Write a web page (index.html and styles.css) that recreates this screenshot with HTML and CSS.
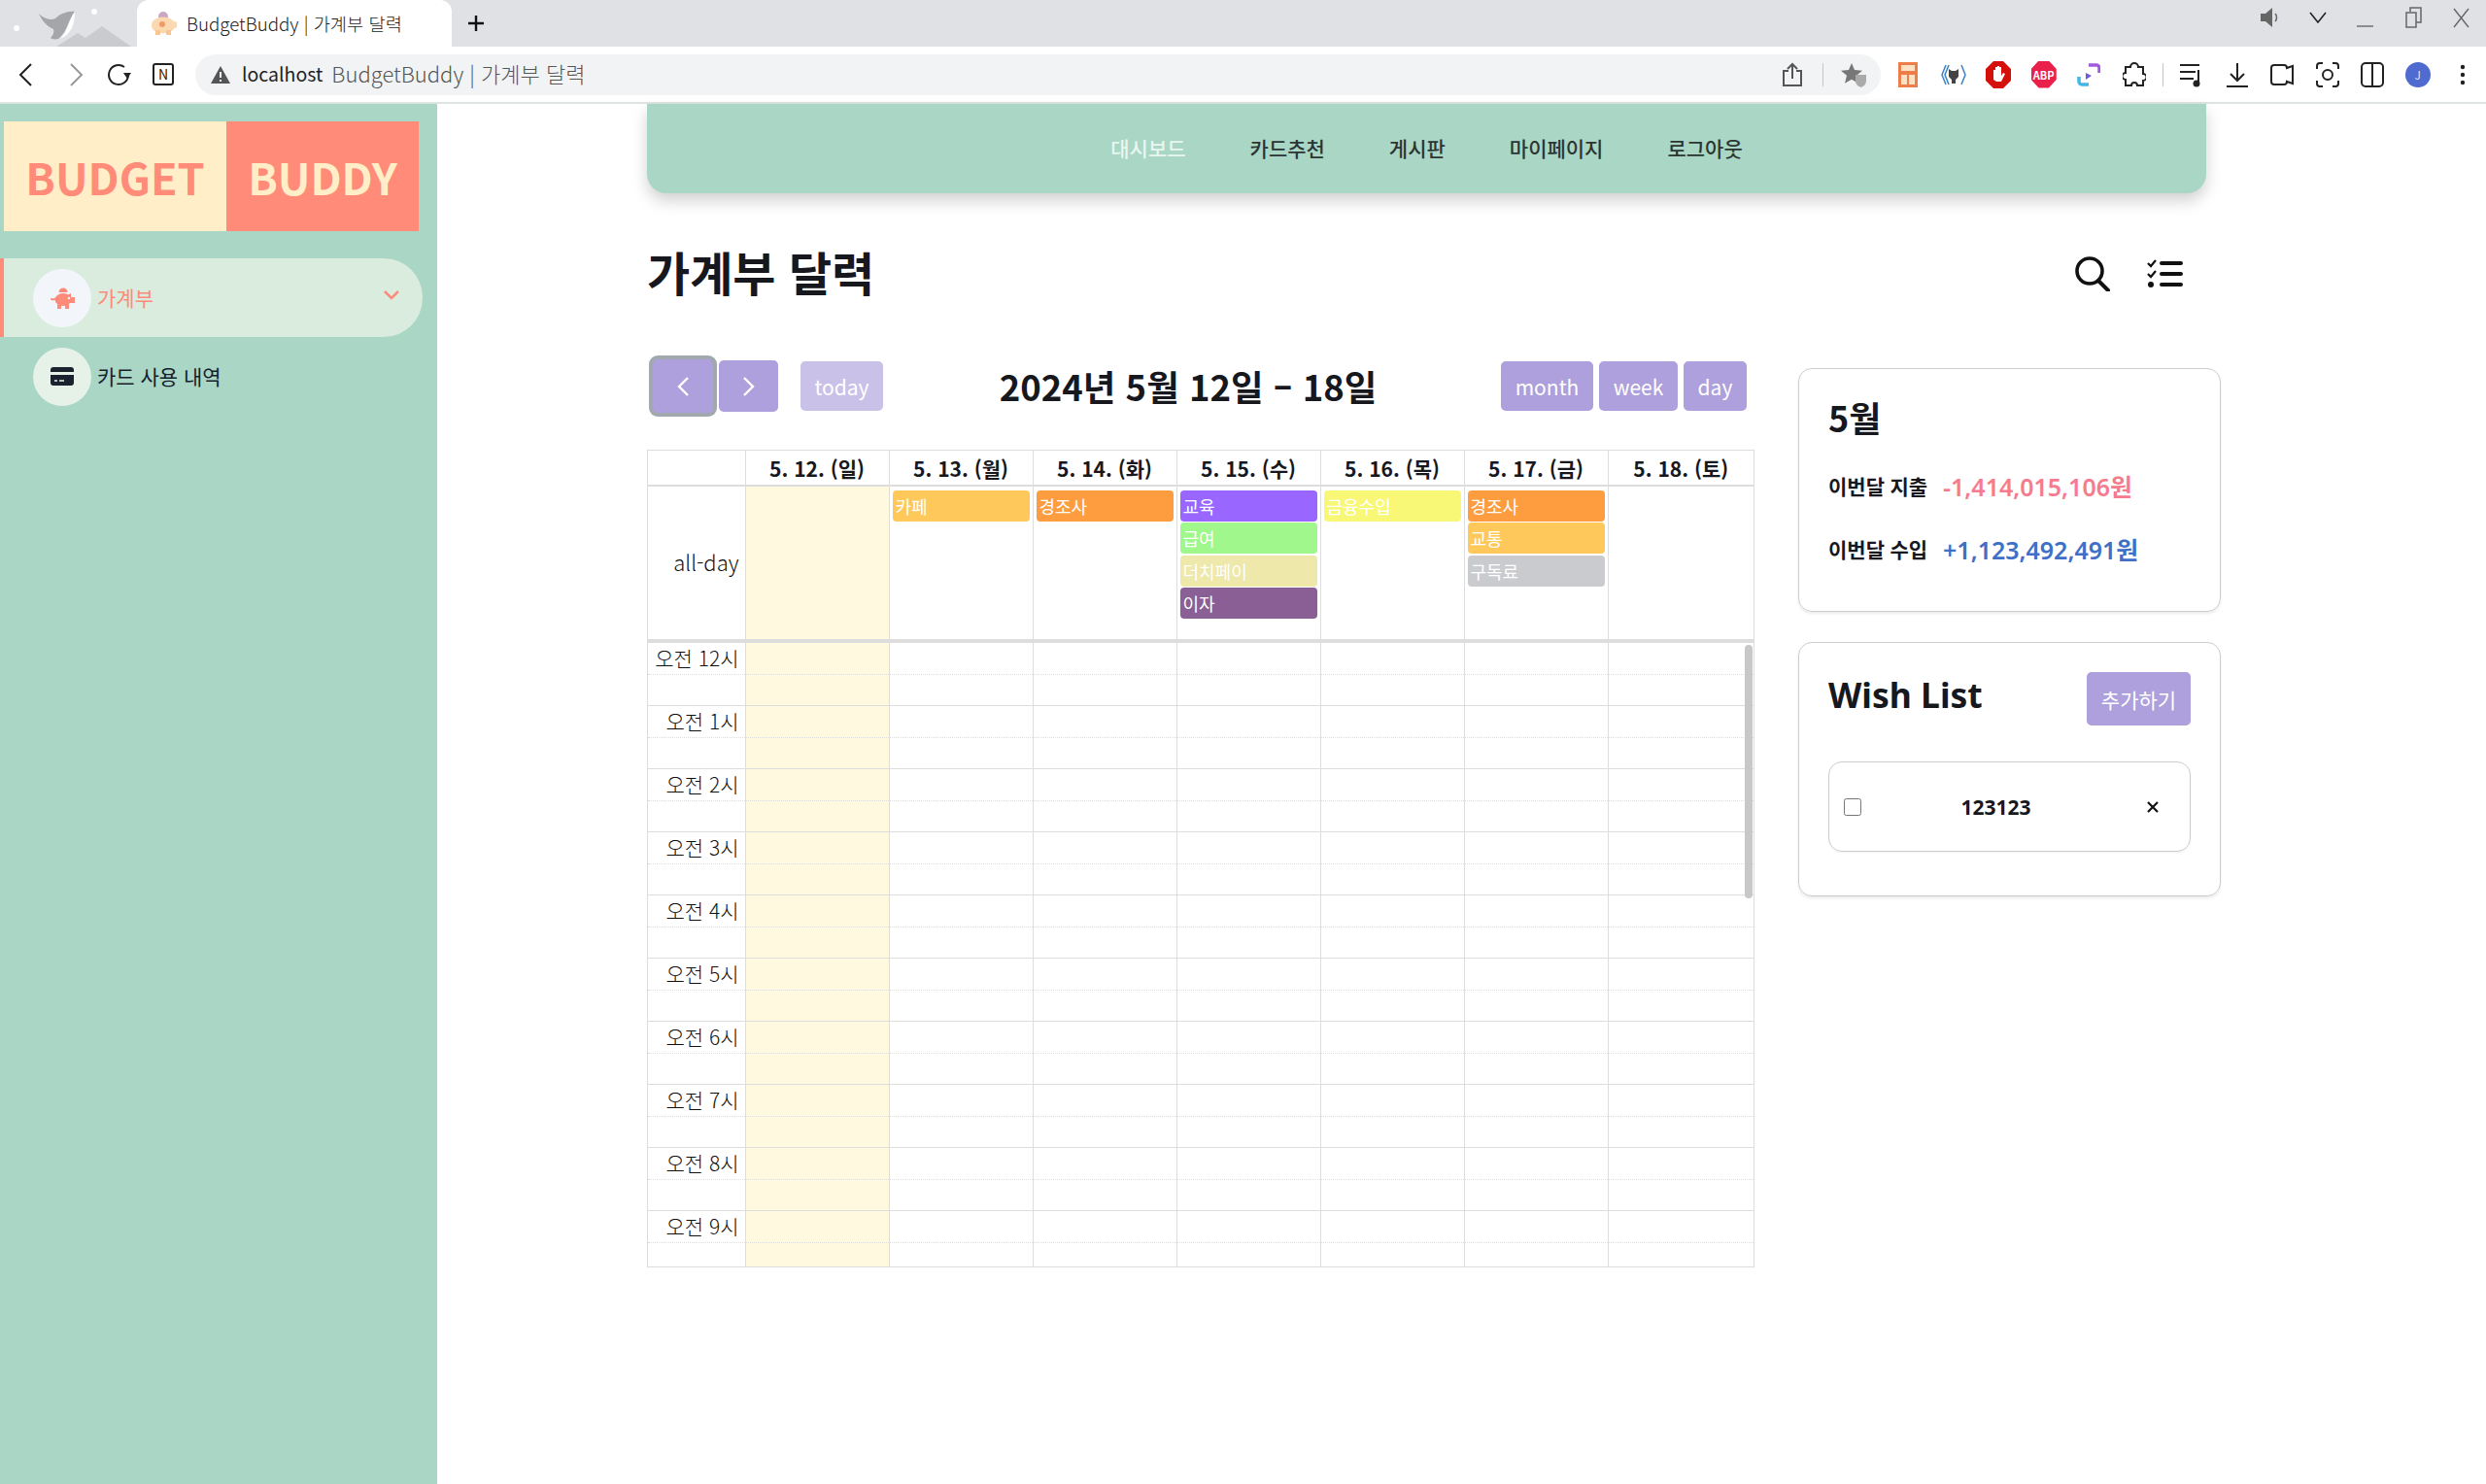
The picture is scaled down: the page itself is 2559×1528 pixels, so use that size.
FILE: index.html
```html
<!DOCTYPE html>
<html lang="ko">
<head>
    <meta charset="UTF-8">
    <title>BudgetBuddy | 가계부 달력</title>
    <link rel="stylesheet" href="styles.css">
</head>
<body>
    <!-- browser window -->
    <div class="tabstrip">
        <svg class="theme-art" width="140" height="48" viewBox="0 0 140 48">
            <circle cx="17" cy="29" r="3" fill="#fff"/>
            <circle cx="97" cy="12" r="3" fill="#fff"/>
            <path d="M58 48l22-14 8 5 17-12 30 21z" fill="#c9cbce"/>
            <path d="M40 14c6 6 12 7 17 5 5-5 13-8 20-7-7 8-7 20-17 28-4 1-7 0-8-1 3-3 4-6 3-9-7-3-12-9-15-16z" fill="#a4a6aa"/>
            <path d="M62 40c8-8 9-20 15-28 0 12-3 23-15 28z" fill="#fff"/>
        </svg>
        <div class="tab">
            <svg width="28" height="26" viewBox="0 0 28 26">
                <circle cx="13" cy="6" r="5" fill="#c9a6c4"/>
                <ellipse cx="13" cy="15" rx="12" ry="8.500" fill="#fbd8b0"/>
                <rect x="21" y="11" width="6" height="7" rx="2" fill="#fbd8b0"/>
                <rect x="5" y="20" width="5" height="5" fill="#f6c594"/>
                <rect x="16" y="20" width="5" height="5" fill="#f6c594"/>
                <circle cx="12" cy="14" r="3" fill="#f09a6a"/>
            </svg>
            <span class="tab-title">BudgetBuddy | 가계부 달력</span>
        </div>
        <svg class="new-tab" width="18" height="18" viewBox="0 0 18 18"><path d="M9 1v16M1 9h16" stroke="#111" stroke-width="2.400"/></svg>
        <div class="window-btns">
            <svg width="24" height="24" viewBox="0 0 24 24"><path d="M2 8h5l7-6v20l-7-6H2z" fill="#666"/><path d="M17 8c2 2 2 6 0 8" fill="none" stroke="#666" stroke-width="1.500"/></svg>
            <svg width="24" height="24" viewBox="0 0 24 24"><path d="M4 7l8 10 8-10" fill="none" stroke="#222" stroke-width="1.600"/></svg>
            <svg width="24" height="24" viewBox="0 0 24 24"><path d="M3 21h17" stroke="#777" stroke-width="1.600"/></svg>
            <svg width="24" height="24" viewBox="0 0 24 24"><path d="M9 6V2h11v15h-5M5 7h10v15H5z" fill="none" stroke="#666" stroke-width="1.500"/></svg>
            <svg width="24" height="24" viewBox="0 0 24 24"><path d="M5 3l15 19M20 3L5 22" stroke="#666" stroke-width="1.400"/></svg>
        </div>
    </div>
    <div class="toolbar">
        <div class="tb-left">
            <span class="tb-btn"><svg width="24" height="24" viewBox="0 0 24 24"><path d="M17 1L6 12l11 11" fill="none" stroke="#222" stroke-width="2"/></svg></span>
            <span class="tb-btn fwd"><svg width="24" height="24" viewBox="0 0 24 24"><path d="M7 1l11 11L7 23" fill="none" stroke="#999" stroke-width="2"/></svg></span>
            <span class="tb-btn reload"><svg width="24" height="24" viewBox="0 0 24 24"><path d="M17 4a10 10 0 1 0 4 9" fill="none" stroke="#222" stroke-width="2"/><path d="M16 10h8l-4 6z" fill="#222"/></svg></span>
            <span class="tb-btn"><span class="n-box">N</span></span>
        </div>
        <div class="omnibox">
            <svg width="20" height="18" viewBox="0 0 20 18"><path d="M10 0l10 18H0z" fill="#555"/><path d="M10 6v6M10 14v2" stroke="#f1f3f4" stroke-width="2"/></svg>
            <span class="host">localhost</span>
            <span class="page-name">BudgetBuddy | 가계부 달력</span>
            <svg class="share" width="22" height="26" viewBox="0 0 22 26"><path d="M7 9H2v15h18V9h-5M11 17V2M6 7l5-5 5 5" fill="none" stroke="#555" stroke-width="2"/></svg>
            <span class="omni-line"></span>
            <svg width="28" height="26" viewBox="0 0 28 26"><path d="M11 1l3 7 8 .7-6 5 2 8-7-4-7 4 2-8-6-5 8-.7z" fill="#777"/><path d="M15 13h11v6c0 4-3 6-5.500 7-2.500-1-5.500-3-5.500-7z" fill="#aaa"/></svg>
        </div>
        <div class="tb-right">
            <span class="tb-btn"><svg width="20" height="26" viewBox="0 0 20 26"><rect width="20" height="26" fill="#ee7d4a"/><rect x="3" y="3" width="14" height="6" fill="#fbe2c4"/><rect x="3" y="13" width="6" height="10" fill="#fbe2c4"/><rect x="11" y="13" width="6" height="10" fill="#fbe2c4"/></svg></span>
            <span class="tb-btn"><svg width="26" height="24" viewBox="0 0 26 24"><path d="M5 2L1 12l4 10M8 2L4 12l4 10M21 2l4 10-4 10" fill="none" stroke="#3b82c4" stroke-width="1.500"/><path d="M8 6l3 2h4l3-2v8l-3 3v4h-4v-4l-3-3z" fill="#444"/></svg></span>
            <span class="tb-btn"><svg width="26" height="28" viewBox="0 0 26 28"><path d="M8 0h10l8 8v12l-8 8H8l-8-8V8z" fill="#d50f0a"/><path d="M8 19V9h2v5-8h2v7-8h2v8-7h2v9l2-3 2 1-4 8H11z" fill="#fff"/></svg></span>
            <span class="tb-btn"><span class="abp">ABP</span></span>
            <span class="tb-btn"><svg width="24" height="26" viewBox="0 0 24 26"><path d="M12 3h8a3 3 0 0 1 3 3v5" fill="none" stroke="#a25be0" stroke-width="3.500"/><path d="M12 23H5a3 3 0 0 1-3-3v-5" fill="none" stroke="#3fb8e8" stroke-width="3.500"/><path d="M9 11l6 3-6 4z" fill="#6a5be0"/></svg></span>
            <span class="tb-btn"><svg width="24" height="26" viewBox="0 0 24 26"><path d="M8 5a4 4 0 0 1 8 0h5v7a3.500 3.500 0 0 1 0 7v5h-6a3 3 0 0 0-6 0H3v-6a3.500 3.500 0 0 1 0-7V5z" fill="none" stroke="#222" stroke-width="2"/></svg></span>
            <span class="tb-line"></span>
            <span class="tb-btn"><svg width="24" height="26" viewBox="0 0 24 26"><path d="M0 3h20M0 10h16M0 17h14M19 8v14" fill="none" stroke="#222" stroke-width="2"/><circle cx="17" cy="22" r="3.500" fill="#222"/></svg></span>
            <span class="tb-btn"><svg width="24" height="26" viewBox="0 0 24 26"><path d="M12 1v18M5 12l7 7 7-7M1 25h22" fill="none" stroke="#222" stroke-width="2"/></svg></span>
            <span class="tb-btn"><svg width="24" height="24" viewBox="0 0 24 24"><path d="M17 5a3 3 0 0 0-3-3H4a3 3 0 0 0-3 3v14a3 3 0 0 0 3 3h10a3 3 0 0 0 3-3l6 2V3z" fill="none" stroke="#222" stroke-width="2"/></svg></span>
            <span class="tb-btn"><svg width="24" height="26" viewBox="0 0 24 26"><path d="M7 1H4a3 3 0 0 0-3 3v3M17 1h3a3 3 0 0 1 3 3v3M7 25H4a3 3 0 0 1-3-3v-3M17 25h3a3 3 0 0 0 3-3v-3" fill="none" stroke="#222" stroke-width="2"/><circle cx="12" cy="13" r="5" fill="none" stroke="#222" stroke-width="2"/></svg></span>
            <span class="tb-btn"><svg width="24" height="26" viewBox="0 0 24 26"><rect x="1" y="1" width="22" height="24" rx="4" fill="none" stroke="#222" stroke-width="2"/><path d="M12 1v24" stroke="#222" stroke-width="2"/></svg></span>
            <span class="tb-btn"><span class="avatar">J</span></span>
            <span class="tb-btn"><svg width="6" height="24" viewBox="0 0 6 24"><circle cx="3" cy="4" r="2.200" fill="#222"/><circle cx="3" cy="12" r="2.200" fill="#222"/><circle cx="3" cy="20" r="2.200" fill="#222"/></svg></span>
        </div>
    </div>

    <div class="app">
        <aside class="sidebar">
            <div class="logo">
                <div class="logo-budget">BUDGET</div>
                <div class="logo-buddy">BUDDY</div>
            </div>
            <ul class="side-menu">
                <li class="side-item active">
                    <span class="side-icon">
                        <svg width="25" height="22" viewBox="0 0 25 22">
                            <path d="M8.500 5a4.500 4.500 0 0 1 9 0z" fill="#fe8a7a"/>
                            <ellipse cx="13" cy="12.500" rx="8.500" ry="6.500" fill="#fe8a7a"/>
                            <path d="M17 8l4-2v4h4v6h-5zM7 16h4v6H7zM15 16h4v6h-4z" fill="#fe8a7a"/>
                            <path d="M5 11c-1.500 2-4 2-4 0" fill="none" stroke="#fe8a7a" stroke-width="2"/>
                            <circle cx="19" cy="11" r="1.200" fill="#f2f6fa"/>
                        </svg>
                    </span>
                    <span class="side-text">가계부</span>
                    <svg class="side-arrow" width="18" height="12" viewBox="0 0 18 12"><path d="M2 2l7 7 7-7" fill="none" stroke="#fe8a7a" stroke-width="2.500"/></svg>
                </li>
                <li class="side-item">
                    <span class="side-icon">
                        <svg width="24" height="19" viewBox="0 0 24 19">
                            <rect width="24" height="19" rx="3" fill="#1a2230"/>
                            <rect y="5" width="24" height="3" fill="#e6f1e8"/>
                            <path d="M4 14h3M9 14h5" stroke="#e6f1e8" stroke-width="1.500"/>
                        </svg>
                    </span>
                    <span class="side-text">카드 사용 내역</span>
                </li>
            </ul>
        </aside>

        <main class="main">
            <nav class="topbar">
                <a class="current">대시보드</a>
                <a>카드추천</a>
                <a>게시판</a>
                <a>마이페이지</a>
                <a>로그아웃</a>
            </nav>

            <div class="page-head">
                <h1>가계부 달력</h1>
                <div class="head-icons">
                    <svg width="37" height="36" viewBox="0 0 37 36"><circle cx="16" cy="15" r="13" fill="none" stroke="#111" stroke-width="3.600"/><path d="M25 25l10 10" stroke="#111" stroke-width="4" stroke-linecap="round"/></svg>
                    <svg width="37" height="30" viewBox="0 0 37 30"><path d="M1 4l3 3 5-6M1 15l3 3 5-6" fill="none" stroke="#111" stroke-width="2.200"/><circle cx="4" cy="26" r="3" fill="#111"/><path d="M15 4h20M15 15h20M15 26h20" stroke="#111" stroke-width="4" stroke-linecap="round"/></svg>
                </div>
            </div>

            <div class="content">
                <section class="calendar-wrap">
                    <div class="cal-toolbar">
                        <div class="btn-group">
                            <button class="cal-btn prev"><svg width="14" height="22" viewBox="0 0 14 22"><path d="M12 2L3 11l9 9" fill="none" stroke="#fff" stroke-width="2.400"/></svg></button>
                            <button class="cal-btn next"><svg width="14" height="22" viewBox="0 0 14 22"><path d="M2 2l9 9-9 9" fill="none" stroke="#fff" stroke-width="2.400"/></svg></button>
                            <button class="cal-btn today-btn">today</button>
                        </div>
                        <h2 class="cal-title">2024년 5월 12일 – 18일</h2>
                        <div class="btn-group views">
                            <button class="cal-btn btn-month">month</button>
                            <button class="cal-btn btn-week">week</button>
                            <button class="cal-btn btn-day">day</button>
                        </div>
                    </div>

                    <div class="calendar">
                        <div class="cal-row head-row">
                            <div class="cell"></div>
                            <div class="cell">5. 12. (일)</div>
                            <div class="cell">5. 13. (월)</div>
                            <div class="cell">5. 14. (화)</div>
                            <div class="cell">5. 15. (수)</div>
                            <div class="cell">5. 16. (목)</div>
                            <div class="cell">5. 17. (금)</div>
                            <div class="cell">5. 18. (토)</div>
                        </div>
                        <div class="cal-row allday-row">
                            <div class="cell axis-allday">all-day</div>
                            <div class="cell today"></div>
                            <div class="cell"><div class="event cafe">카페</div></div>
                            <div class="cell"><div class="event gift">경조사</div></div>
                            <div class="cell">
                                <div class="event edu">교육</div>
                                <div class="event salary">급여</div>
                                <div class="event dutch">더치페이</div>
                                <div class="event interest">이자</div>
                            </div>
                            <div class="cell"><div class="event finance">금융수입</div></div>
                            <div class="cell">
                                <div class="event gift">경조사</div>
                                <div class="event cafe">교통</div>
                                <div class="event subs">구독료</div>
                            </div>
                            <div class="cell"></div>
                        </div>
                        <div class="time-grid">
                            <div class="cal-row hour"><div class="cell axis">오전 12시</div><div class="cell today"></div><div class="cell"></div><div class="cell"></div><div class="cell"></div><div class="cell"></div><div class="cell"></div><div class="cell"></div></div>
                            <div class="cal-row hour"><div class="cell axis">오전 1시</div><div class="cell today"></div><div class="cell"></div><div class="cell"></div><div class="cell"></div><div class="cell"></div><div class="cell"></div><div class="cell"></div></div>
                            <div class="cal-row hour"><div class="cell axis">오전 2시</div><div class="cell today"></div><div class="cell"></div><div class="cell"></div><div class="cell"></div><div class="cell"></div><div class="cell"></div><div class="cell"></div></div>
                            <div class="cal-row hour"><div class="cell axis">오전 3시</div><div class="cell today"></div><div class="cell"></div><div class="cell"></div><div class="cell"></div><div class="cell"></div><div class="cell"></div><div class="cell"></div></div>
                            <div class="cal-row hour"><div class="cell axis">오전 4시</div><div class="cell today"></div><div class="cell"></div><div class="cell"></div><div class="cell"></div><div class="cell"></div><div class="cell"></div><div class="cell"></div></div>
                            <div class="cal-row hour"><div class="cell axis">오전 5시</div><div class="cell today"></div><div class="cell"></div><div class="cell"></div><div class="cell"></div><div class="cell"></div><div class="cell"></div><div class="cell"></div></div>
                            <div class="cal-row hour"><div class="cell axis">오전 6시</div><div class="cell today"></div><div class="cell"></div><div class="cell"></div><div class="cell"></div><div class="cell"></div><div class="cell"></div><div class="cell"></div></div>
                            <div class="cal-row hour"><div class="cell axis">오전 7시</div><div class="cell today"></div><div class="cell"></div><div class="cell"></div><div class="cell"></div><div class="cell"></div><div class="cell"></div><div class="cell"></div></div>
                            <div class="cal-row hour"><div class="cell axis">오전 8시</div><div class="cell today"></div><div class="cell"></div><div class="cell"></div><div class="cell"></div><div class="cell"></div><div class="cell"></div><div class="cell"></div></div>
                            <div class="cal-row hour"><div class="cell axis">오전 9시</div><div class="cell today"></div><div class="cell"></div><div class="cell"></div><div class="cell"></div><div class="cell"></div><div class="cell"></div><div class="cell"></div></div>
                            <div class="scroll-thumb"></div>
                        </div>
                    </div>
                </section>

                <aside class="side-col">
                    <div class="card month-card">
                        <h3>5월</h3>
                        <div class="sum-row"><span class="sum-label">이번달 지출</span><span class="sum-out">-1,414,015,106원</span></div>
                        <div class="sum-row"><span class="sum-label">이번달 수입</span><span class="sum-in">+1,123,492,491원</span></div>
                    </div>
                    <div class="card wish-card">
                        <div class="wish-head">
                            <h3>Wish List</h3>
                            <button class="add-btn">추가하기</button>
                        </div>
                        <div class="wish-item">
                            <input type="checkbox" class="wish-check">
                            <span class="wish-name">123123</span>
                            <svg width="14" height="14" viewBox="0 0 14 14"><path d="M2 2l10 10M12 2L2 12" stroke="#111" stroke-width="2.200"/></svg>
                        </div>
                    </div>
                </aside>
            </div>
        </main>
    </div>
</body>
</html>
```

FILE: styles.css
```css
* {
    box-sizing: border-box;
}
html, body {
    margin: 0;
    padding: 0;
    height: 100%;
    overflow: hidden;
}
body {
    font-family: "Noto Sans CJK KR", "Noto Sans", sans-serif;
    background: #fff;
    color: #16181d;
}

/* browser window */
.tabstrip {
    position: relative;
    display: flex;
    align-items: center;
    height: 48px;
    padding-left: 141px;
    background: #dfe1e5;
}
.theme-art {
    position: absolute;
    left: 0;
    top: 0;
}
.tab {
    display: flex;
    align-items: center;
    gap: 9px;
    width: 324px;
    height: 48px;
    padding-left: 14px;
    background: #fff;
    border-radius: 12px 12px 0 0;
}
.tab-title {
    margin-top: -2px;
    font-size: 18.700px;
    font-weight: 300;
    color: #222;
    white-space: nowrap;
}
.new-tab {
    margin-left: 16px;
}
.window-btns {
    display: flex;
    gap: 25px;
    margin-left: auto;
    margin-right: 14px;
    margin-top: -12px;
}
.toolbar {
    display: flex;
    align-items: center;
    height: 57px;
    background: #fff;
    border-radius: 12px 12px 0 0;
}
.tb-left {
    display: flex;
    gap: 3px;
    padding-left: 5px;
    width: 201px;
}
.tb-btn {
    display: flex;
    align-items: center;
    justify-content: center;
    width: 44px;
    flex: none;
}
.tb-right .tb-btn {
    width: 46.500px;
}
.fwd svg {
    margin-left: 8px;
}
.reload svg {
    margin-left: 3px;
}
.n-box {
    display: block;
    width: 22px;
    height: 23px;
    border: 2px solid #222;
    border-radius: 3px;
    font-size: 14px;
    line-height: 19px;
    text-align: center;
    color: #222;
}
.omnibox {
    display: flex;
    align-items: center;
    width: 1735px;
    height: 42px;
    padding: 0 13px 0 16px;
    background: #f1f3f4;
    border-radius: 21px;
}
.host {
    margin: -3px 0 0 12px;
    font-size: 19.500px;
    color: #222;
}
.page-name {
    margin: -3px 0 0 9px;
    font-size: 22px;
    font-weight: 300;
    color: #555;
}
.share {
    margin-left: auto;
}
.omni-line {
    width: 1px;
    height: 24px;
    margin: 0 18px 0 20px;
    background: #c4c7c9;
}
.tb-right {
    display: flex;
    align-items: center;
    margin-left: 5px;
}
.tb-line {
    width: 1px;
    height: 24px;
    margin: 0 6px;
    background: #c4c7c9;
}
.abp {
    display: block;
    width: 26px;
    height: 28px;
    background: #e8204a;
    clip-path: polygon(30% 0, 70% 0, 100% 30%, 100% 70%, 70% 100%, 30% 100%, 0 70%, 0 30%);
    color: #fff;
    font-size: 11px;
    font-weight: 700;
    line-height: 28px;
    text-align: center;
}
.avatar {
    display: block;
    width: 26px;
    height: 26px;
    border-radius: 50%;
    background: #4f6bd0;
    color: #dfe5fa;
    font-size: 12px;
    line-height: 26px;
    text-align: center;
}

/* page */
.app {
    display: flex;
    height: 1423px;
    border-top: 2px solid #dde4e1;
}
.sidebar {
    flex: none;
    width: 450px;
    background: #a9d6c5;
    padding-top: 18px;
}
.logo {
    display: flex;
    width: 427px;
    height: 113px;
    margin-left: 4px;
    font-size: 45px;
    font-weight: 700;
}
.logo div {
    display: flex;
    align-items: center;
    justify-content: center;
}
.logo-budget {
    width: 229px;
    background: #ffeec8;
    color: #ff8b78;
}
.logo-buddy {
    width: 198px;
    background: #ff8b78;
    color: #ffeec8;
}
.side-menu {
    list-style: none;
    margin: 28px 0 0;
    padding: 0;
}
.side-item {
    display: flex;
    align-items: center;
    gap: 6px;
    width: 435px;
    height: 81px;
    padding-left: 34px;
    font-size: 21px;
    color: #16202c;
}
.side-item.active {
    padding-left: 30px;
    background: #d9ecde;
    border-left: 4px solid #ff8b78;
    border-radius: 0 40px 40px 0;
    color: #fe8a7a;
}
.side-text {
    margin-top: -2px;
}
.side-icon {
    display: flex;
    align-items: center;
    justify-content: center;
    width: 60px;
    height: 60px;
    border-radius: 50%;
    background: #e6f1e8;
}
.active .side-icon {
    background: #f2f6fa;
}
.side-arrow {
    margin-left: auto;
    margin-right: 23px;
    margin-top: -6px;
}
.main {
    flex: 1;
    padding-left: 216px;
    min-width: 0;
}
.topbar {
    display: flex;
    justify-content: center;
    align-items: center;
    gap: 66px;
    width: 1605px;
    height: 92px;
    padding-bottom: 2px;
    background: #a9d6c5;
    border-radius: 0 0 20px 20px;
    box-shadow: 0 8px 16px rgba(0, 0, 0, 0.18);
    font-size: 21px;
    font-weight: 500;
    color: #2b3533;
}
.topbar .current {
    color: #e9f6f0;
}
.page-head {
    display: flex;
    justify-content: space-between;
    align-items: center;
    width: 1605px;
    height: 70px;
    margin-top: 45px;
    padding-right: 24px;
}
.head-icons {
    display: flex;
    align-items: center;
    gap: 38px;
    margin-top: 6px;
}
h1 {
    margin: 0;
    font-size: 48px;
    font-weight: 700;
}
.content {
    display: flex;
    margin-top: 52px;
}
.calendar-wrap {
    flex: none;
    width: 1140px;
}
.cal-toolbar {
    display: flex;
    justify-content: space-between;
    align-items: center;
    height: 63px;
    margin-bottom: 34px;
    padding: 0 8px 0 6px;
}
.btn-group {
    display: flex;
    align-items: center;
    gap: 6px;
}
.cal-btn {
    display: flex;
    align-items: center;
    justify-content: center;
    height: 51px;
    padding: 0;
    border: 0;
    border-radius: 5px;
    background: #ada0dc;
    color: #fff;
    font-family: inherit;
    font-size: 21px;
}
.cal-btn.prev {
    width: 62px;
    height: 55px;
    box-shadow: 0 0 0 4px #a1a8ae;
}
.cal-btn.next {
    width: 61px;
    height: 53px;
}
.today-btn {
    width: 85px;
    margin-left: 17px;
    opacity: 0.65;
}
.btn-month {
    width: 95px;
}
.btn-week {
    width: 81px;
}
.btn-day {
    width: 65px;
}
.cal-title {
    margin: 0 8px 0 0;
    font-size: 36.500px;
    font-weight: 700;
}
.calendar {
    width: 1140px;
    border: 1px solid #ddd;
}
.cal-row {
    display: grid;
    grid-template-columns: 100.500px repeat(6, 148px) 1fr;
}
.cell {
    border-right: 1px solid #ddd;
}
.cell:last-child {
    border-right: 0;
}
.head-row {
    height: 37px;
    border-bottom: 2px solid #ddd;
}
.head-row .cell {
    text-align: center;
    font-size: 21px;
    font-weight: 700;
    line-height: 36px;
}
.allday-row {
    height: 159px;
    border-bottom: 2px solid #ddd;
}
.allday-row .cell {
    padding: 4px 3px 0;
}
.allday-row .axis-allday {
    display: flex;
    align-items: center;
    justify-content: flex-end;
    padding: 0 6px 3px 0;
    font-size: 22px;
    font-weight: 300;
    color: #111;
}
.today {
    background: #fff9e0;
}
.event {
    height: 32px;
    margin-bottom: 1.400px;
    padding-left: 3px;
    border-radius: 4px;
    color: #fff;
    font-size: 18px;
    line-height: 32px;
}
.cafe { background: #fec95a; }
.gift { background: #fd9d3f; }
.edu { background: #9966ff; }
.salary { background: #a0f88c; }
.dutch { background: #eee8aa; }
.interest { background: #8a5f96; }
.finance { background: #f8f876; }
.subs { background: #c9cbcf; }
.time-grid {
    position: relative;
    height: 644px;
    border-top: 2px solid #ddd;
    overflow: hidden;
}
.hour {
    position: relative;
    height: 65px;
    border-bottom: 1px solid #ddd;
}
.hour::after {
    content: "";
    position: absolute;
    left: 0;
    right: 0;
    top: 32px;
    border-top: 1px dotted #ddd;
}
.axis {
    padding-right: 6px;
    text-align: right;
    font-size: 21px;
    font-weight: 300;
    line-height: 30px;
    color: #111;
}
.scroll-thumb {
    position: absolute;
    top: 2px;
    right: 1px;
    width: 8px;
    height: 261px;
    border-radius: 4px;
    background: #c8c8c8;
}
.side-col {
    flex: none;
    width: 435px;
    margin: 13px 0 0 45px;
    font-family: "Noto Sans", "Noto Sans CJK KR", sans-serif;
}
.card {
    border: 1px solid #ccc;
    border-radius: 14px;
    box-shadow: 0 2px 3px rgba(0, 0, 0, 0.08);
}
.card h3 {
    margin: 0;
    font-weight: 700;
}
.month-card {
    height: 251px;
    padding: 19px 30px 0;
}
.month-card h3 {
    font-family: "Noto Sans CJK KR", sans-serif;
    font-size: 36px;
    line-height: 60px;
    margin-bottom: 8px;
}
.sum-row {
    display: flex;
    align-items: center;
    gap: 16px;
    height: 65px;
    font-size: 25px;
    font-weight: 600;
}
.sum-label {
    font-size: 21px;
    font-weight: 700;
    color: #16181d;
}
.sum-out {
    color: #f67b8f;
}
.sum-in {
    color: #3f6fc6;
}
.wish-card {
    height: 262px;
    margin-top: 31px;
    padding: 30px 30px 0;
}
.wish-head {
    display: flex;
    justify-content: space-between;
    align-items: center;
    height: 55px;
}
.wish-head h3 {
    font-size: 35.500px;
    margin-top: -10px;
}
.add-btn {
    width: 107px;
    height: 55px;
    padding: 0;
    border: 0;
    border-radius: 5px;
    background: #ada0dc;
    color: #fff;
    font-family: "Noto Sans CJK KR", sans-serif;
    font-size: 21px;
}
.wish-item {
    display: flex;
    align-items: center;
    height: 93px;
    margin-top: 37px;
    padding: 0 31px 0 15px;
    border: 1px solid #ccc;
    border-radius: 14px;
    box-shadow: 0 1px 2px rgba(0, 0, 0, 0.06);
}
.wish-check {
    width: 18px;
    height: 18px;
    margin: 0;
}
.wish-name {
    flex: 1;
    margin-right: 16px;
    text-align: center;
    font-size: 21px;
    font-weight: 700;
}
```
